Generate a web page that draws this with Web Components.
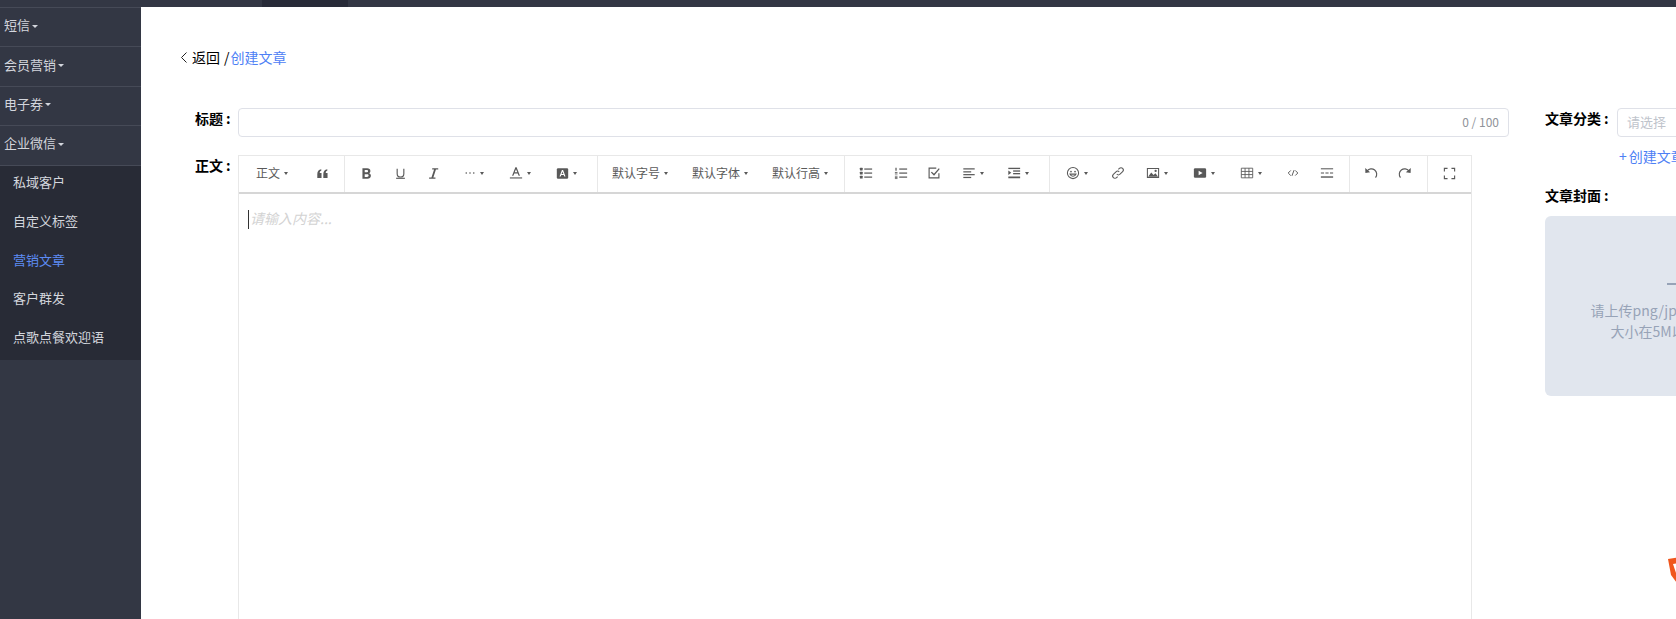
<!DOCTYPE html>
<html lang="zh">
<head>
<meta charset="utf-8">
<title>创建文章</title>
<style>
  html, body { margin: 0; height: 100%; overflow: hidden; background: #fff; }
  body { font-family: "Noto Sans CJK SC", "Noto Sans", sans-serif; }
</style>
</head>
<body>
<app-shell>
  <side-nav slot="nav"></side-nav>
  <article-form></article-form>
</app-shell>

<script>
const FONT = '"Noto Sans CJK SC", "Noto Sans", sans-serif';

// toolbar icons, all drawn on a 16x16 box
const ICONS = {
  quote: '<path fill="currentColor" d="M1.6 13.5V8.6c0-3.2 1.7-5.2 4.9-5.8v1.9C5.2 5.1 4.6 6 4.6 7.3h2.2v6.2zM9 13.5V8.6c0-3.2 1.7-5.2 4.9-5.8v1.9c-1.3.4-1.9 1.3-1.9 2.6h2.2v6.2z"/>',
  bold: '<path fill="currentColor" fill-rule="evenodd" d="M3 1.5h5.8c2.5 0 4 1.3 4 3.3 0 1.3-.7 2.3-1.8 2.8 1.500.4 2.400 1.500 2.400 3.100 0 2.300-1.700 3.800-4.400 3.800H3zm2.800 2.300v2.800h2.500c1 0 1.600-.5 1.600-1.400s-.6-1.400-1.600-1.400zm0 5v3.400h2.900c1.200 0 1.900-.6 1.900-1.700s-.7-1.700-1.900-1.700z"/>',
  underline: '<path fill="none" stroke="currentColor" stroke-width="1.4" d="M3.900 2v6.200a4.100 4.100 0 0 0 8.200 0V2"/><path fill="currentColor" d="M2.600 13.200h10.800v1.400H2.600z"/>',
  italic: '<path fill="currentColor" d="M6.400 1.500h7.400v1.600H11L7.800 12.900h2.600v1.600H2.600v-1.600h2.900L8.700 3.100H6.400z"/>',
  more: '<g fill="currentColor"><circle cx="3" cy="8" r="1.100"/><circle cx="8" cy="8" r="1.100"/><circle cx="13" cy="8" r="1.100"/></g>',
  color: '<path fill="currentColor" d="M7.300 1.500h1.400l3.800 9.500H11l-1-2.500H6l-1 2.500H3.500zm2.200 5.700L8 3.600 6.500 7.200z"/><path fill="currentColor" d="M1 13h14v1.300H1z"/>',
  bgcolor: '<rect x="1" y="1.500" width="14" height="13" rx="1.500" fill="currentColor"/><path fill="#fff" d="M7.300 3.800h1.400l3 7.900h-1.500l-.7-2H6.500l-.7 2H4.300zm1.800 4.700L8 5.700 6.900 8.500z"/>',
  ul: '<g fill="currentColor"><rect x="1" y="2" width="3.200" height="3" rx=".6"/><rect x="1" y="6.600" width="3.200" height="3" rx=".6"/><rect x="1" y="11.200" width="3.200" height="3" rx=".6"/><rect x="6" y="2.800" width="9" height="1.400"/><rect x="6" y="7.400" width="9" height="1.400"/><rect x="6" y="12" width="9" height="1.400"/></g>',
  ol: '<g fill="currentColor"><rect x="1.600" y="2" width="1.400" height="3.400"/><rect x="1" y="6.800" width="3" height="1"/><rect x="1" y="8.600" width="3" height="1"/><rect x="1" y="11.200" width="3" height=".9"/><rect x="1" y="12.600" width="3" height=".9"/><rect x="1" y="14" width="3" height=".9"/><rect x="6" y="2.800" width="9" height="1.400"/><rect x="6" y="7.400" width="9" height="1.400"/><rect x="6" y="12" width="9" height="1.400"/></g>',
  todo: '<path fill="none" stroke="currentColor" stroke-width="1.300" d="M13.600 8.400v5.200H2.400V2.400h8.200"/><path fill="none" stroke="currentColor" stroke-width="1.500" d="M5 7l3 3 6-7"/>',
  align: '<g fill="currentColor"><rect x="1.500" y="2.600" width="13" height="1.400"/><rect x="1.500" y="6" width="9" height="1.400"/><rect x="1.500" y="9.200" width="13" height="1.400"/><rect x="1.500" y="12.400" width="9" height="1.400"/></g>',
  indent: '<g fill="currentColor"><rect x="1.500" y="2" width="13.500" height="1.500"/><rect x="7" y="5" width="8" height="1.500"/><rect x="7" y="8" width="8" height="1.500"/><rect x="1.500" y="12" width="13.500" height="2"/><path d="M1.500 5l3.400 2.700-3.400 2.700z"/></g>',
  emoji: '<circle cx="8" cy="8" r="6.400" fill="none" stroke="currentColor" stroke-width="1.200"/><circle cx="5.700" cy="6.400" r="1" fill="currentColor"/><circle cx="10.300" cy="6.400" r="1" fill="currentColor"/><path fill="none" stroke="currentColor" stroke-width="1.300" d="M4.600 9.300a3.600 3.600 0 0 0 6.800 0z"/>',
  link: '<path fill="none" stroke="currentColor" stroke-width="1.200" d="M6.600 9.400a2.600 2.600 0 0 0 3.700 0l3-3a2.600 2.600 0 0 0-3.700-3.700L8.400 3.900M9.400 6.600a2.600 2.600 0 0 0-3.700 0l-3 3a2.600 2.600 0 0 0 3.700 3.700l1.200-1.200"/>',
  image: '<path fill="none" stroke="currentColor" stroke-width="1.200" d="M1.600 2.800h12.800v10.400H1.600z"/><path fill="currentColor" d="M2.400 12.400l3.600-5 2.600 3 2.200-2.200 3 4.200z"/><circle cx="11" cy="5.600" r="1.300" fill="currentColor"/>',
  video: '<rect x="1" y="2.600" width="14" height="10.800" rx="1.400" fill="currentColor"/><path fill="#fff" d="M6.400 5.400L11 8l-4.600 2.600z"/>',
  table: '<path fill="none" stroke="currentColor" stroke-width="1" d="M1.500 2.500h13v11h-13zM1.500 6.200h13M1.500 9.800h13M5.800 2.500v11M10.200 2.500v11"/>',
  code: '<path fill="none" stroke="currentColor" stroke-width="1.300" d="M5 4.600L1.600 8 5 11.400M11 4.600L14.400 8 11 11.400M9.400 4.200L6.600 11.800"/>',
  hr: '<g fill="currentColor"><rect x="1" y="2.600" width="14" height="1.200"/><rect x="1" y="7.400" width="3.600" height="1.200"/><rect x="6.200" y="7.400" width="3.600" height="1.200"/><rect x="11.400" y="7.400" width="3.600" height="1.200"/><rect x="1" y="11.800" width="14" height="1.600"/></g>',
  undo: '<path fill="none" stroke="currentColor" stroke-width="1.300" d="M3.600 5.600a6 6 0 0 1 9.600 7.600"/><path fill="currentColor" d="M1.400 2.400l.2 5.600 5.400-.9z"/>',
  redo: '<path fill="none" stroke="currentColor" stroke-width="1.300" d="M12.400 5.600a6 6 0 0 0-9.600 7.600"/><path fill="currentColor" d="M14.600 2.400L14.400 8 9 7.100z"/>',
  full: '<path fill="none" stroke="currentColor" stroke-width="1.400" d="M1.700 5.600V1.700h3.900M10.400 1.700h3.900v3.900M14.300 10.400v3.900h-3.900M5.600 14.300H1.700v-3.900"/>'
};

class AppShell extends HTMLElement {
  connectedCallback() {
    this.attachShadow({ mode: 'open' });
    this.shadowRoot.innerHTML = `
      <style>
        :host { display: flex; flex-direction: column; height: 619px; overflow: hidden; background: #333744; }
        .topbar { flex: none; height: 7px; background: #333744; padding-left: 262px; }
        .topbar div { width: 86px; height: 7px; background: #282b38; }
        .body { flex: 1; display: flex; min-height: 0; }
        .content { flex: 1; min-width: 0; background: #fff; overflow: hidden; }
      </style>
      <div class="topbar"><div></div></div>
      <div class="body">
        <slot name="nav"></slot>
        <div class="content"><slot></slot></div>
      </div>
    `;
  }
}

class SideNav extends HTMLElement {
  connectedCallback() {
    this.attachShadow({ mode: 'open' });
    const groups = ['短信', '会员营销', '电子券', '企业微信'];
    const subs = ['私域客户', '自定义标签', '营销文章', '客户群发', '点歌点餐欢迎语'];
    this.shadowRoot.innerHTML = `
      <style>
        :host { display: block; flex: none; width: 141px; background: #333744; font: 13px/20px ${FONT}; color: #d3d6dd; }
        .group { box-sizing: border-box; height: 39.4px; border-top: 1px solid #464a57; padding: 0 0 4px 4px; display: flex; align-items: center; }
        .caret { width: 0; height: 0; margin: 2px 0 0 2px; border: 3px solid transparent; border-top-color: #d3d6dd; border-bottom: 0; }
        .subs { border-top: 1px solid #464a57; background: #282b36; padding-bottom: 1px; }
        .sub { box-sizing: border-box; height: 38.75px; padding: 6.5px 0 0 13px; }
        .sub.on { color: #5d8bf4; }
      </style>
      ${groups.map(g => `<div class="group">${g}<span class="caret"></span></div>`).join('')}
      <div class="subs">
        ${subs.map((s, i) => `<div class="sub${i === 2 ? ' on' : ''}">${s}</div>`).join('')}
      </div>
    `;
  }
}

class TbItem extends HTMLElement {
  connectedCallback() {
    this.attachShadow({ mode: 'open' });
    const w = this.getAttribute('w');
    const icon = this.getAttribute('icon');
    const caret = this.hasAttribute('caret');
    const size = this.getAttribute('size') || 14;
    this.shadowRoot.innerHTML = `
      <style>
        :host { display: flex; flex: none; box-sizing: border-box; align-items: center; justify-content: center; gap: 4px; height: 36px; padding-bottom: 2px; color: #595959; font: 12px/16px ${FONT}; ${w ? `width:${w}px;` : ''} }
        svg { display: block; }
        .caret { width: 0; height: 0; border: 2.5px solid transparent; border-top: 3.5px solid #595959; border-bottom: 0; }
      </style>
      ${icon ? `<svg width="${size}" height="${size}" viewBox="0 0 16 16">${ICONS[icon]}</svg>` : '<slot></slot>'}
      ${caret ? '<span class="caret"></span>' : ''}
    `;
  }
}

class TbGroup extends HTMLElement {
  connectedCallback() {
    this.attachShadow({ mode: 'open' });
    this.shadowRoot.innerHTML = `
      <style>
        :host { box-sizing: border-box; display: flex; flex: none; height: 36px; border-right: 1px solid #e8e8e8; }
        :host([last]) { border-right: 0; }
      </style>
      <slot></slot>
    `;
  }
}

class RichEditor extends HTMLElement {
  connectedCallback() {
    this.attachShadow({ mode: 'open' });
    this.shadowRoot.innerHTML = `
      <style>
        :host { display: block; box-sizing: border-box; width: 1234px; border: 1px solid #e8e8e8; border-bottom: 0; }
        .bar { display: flex; height: 36px; border-bottom: 2px solid #d6d6d6; }
        .text { height: 520px; padding: 14px 0 0 9px; box-sizing: border-box; }
        .line { display: flex; align-items: center; height: 20px; font: italic 14px/20px ${FONT}; color: #d3d3d3; }
        .cursor { width: 1px; height: 19px; margin: 2px 1px 0 0; background: #333; }
      </style>
      <div class="bar"><slot></slot></div>
      <div class="text"><div class="line"><span class="cursor"></span>请输入内容...</div></div>
    `;
  }
}

class FormField extends HTMLElement {
  connectedCallback() {
    this.attachShadow({ mode: 'open' });
    this.shadowRoot.innerHTML = `
      <style>
        :host { display: flex; align-items: flex-start; }
        .label { flex: none; margin-top: -1px; font: bold 14px/22px ${FONT}; color: #000; white-space: nowrap; width: var(--label-width, 43px); }
        .label i { font-style: normal; margin-left: 3px; }
        .box { flex: 1; min-width: 0; }
      </style>
      <div class="label">${this.getAttribute('label')}<i>:</i></div>
      <div class="box"><slot></slot></div>
    `;
  }
}

class TextBox extends HTMLElement {
  connectedCallback() {
    this.attachShadow({ mode: 'open' });
    const placeholder = this.getAttribute('placeholder') || '';
    const count = this.getAttribute('count') || '';
    this.shadowRoot.innerHTML = `
      <style>
        :host { display: flex; box-sizing: border-box; height: 29px; align-items: center; justify-content: space-between; padding: 0 9px 2px 9px; border: 1px solid #dfe1e8; border-radius: 4px; background: #fff; font: 13px/18px ${FONT}; color: #c0c4cc; }
        .count { font-size: 12px; color: #909399; }
      </style>
      <span>${placeholder}</span><span class="count">${count}</span>
    `;
  }
}

class CoverUpload extends HTMLElement {
  connectedCallback() {
    this.attachShadow({ mode: 'open' });
    this.shadowRoot.innerHTML = `
      <style>
        :host { display: flex; flex-direction: column; align-items: center; box-sizing: border-box; width: 276px; height: 180px; padding-top: 60px; border-radius: 6px; background: #e1e6ee; color: #97a3b7; font: 14px/21px ${FONT}; }
        .plus { position: relative; width: 32px; height: 16px; margin-bottom: 8px; }
        .plus::before { content: ''; position: absolute; left: 0; right: 0; top: 7px; height: 2px; background: #97a3b7; }
        .plus::after { content: ''; position: absolute; left: 15px; width: 2px; top: -8px; bottom: -8px; background: #97a3b7; }
        div { white-space: nowrap; }
      </style>
      <span class="plus"></span>
      <div>请上传png/jpg/jpeg格式图片</div>
      <div>大小在5M以内的图片。</div>
    `;
  }
}

class ArticleForm extends HTMLElement {
  connectedCallback() {
    this.attachShadow({ mode: 'open' });
    this.shadowRoot.innerHTML = `
      <style>
        :host { display: block; position: relative; height: 612px; padding: 39px 0 0 40px; box-sizing: border-box; font: 14px/22px ${FONT}; color: #000; }
        .crumb { display: flex; align-items: center; height: 22px; }
        .crumb svg { margin-right: 5px; }
        .crumb b { font-weight: 400; margin: 0 1px 0 4px; }
        .crumb a { color: #4d80f5; }
        .form { display: flex; margin: 40px 0 0 14px; width: 1700px; }
        .main { flex: none; width: 1314px; }
        .gap { height: 18px; }
        .side { flex: none; margin-left: 36px; width: 400px; }
        .side form-field { --label-width: 72px; }
        .add { margin: 8px 0 0 74px; color: #4d80f5; }
        .add span { margin-right: 2px; }
        .cover { margin-top: 17px; }
        .cover-box { margin-top: 10px; }
        .cover-label { font: bold 14px/22px ${FONT}; }
        .cover-label i { font-style: normal; margin-left: 3px; }
        .badge { position: absolute; left: 1527px; top: 550px; }
      </style>
      <div class="crumb">
        <svg width="6" height="11" viewBox="0 0 6 11"><path d="M5.500.5l-5 5 5 5" fill="none" stroke="#222" stroke-width="1"/></svg>
        <span>返回</span><b>/</b><a>创建文章</a>
      </div>
      <div class="form">
        <div class="main">
          <form-field label="标题"><text-box count="0 / 100"></text-box></form-field>
          <div class="gap"></div>
          <form-field label="正文">
            <rich-editor>
              <tb-group style="width:106px;padding-left:8px;gap:4px;box-sizing:border-box">
                <tb-item w="50" caret>正文</tb-item><tb-item w="42" icon="quote" size="13"></tb-item>
              </tb-group>
              <tb-group style="width:253px;padding-left:4px">
                <tb-item w="34" icon="bold" size="13"></tb-item><tb-item w="34" icon="underline" size="13"></tb-item><tb-item w="32" icon="italic" size="13"></tb-item><tb-item w="50" icon="more" size="12" caret></tb-item><tb-item w="42" icon="color" caret></tb-item><tb-item w="50" icon="bgcolor" size="13" caret></tb-item>
              </tb-group>
              <tb-group style="width:247px;padding-left:14px;gap:24px">
                <tb-item caret>默认字号</tb-item><tb-item caret>默认字体</tb-item><tb-item caret>默认行高</tb-item>
              </tb-group>
              <tb-group style="width:205px;padding-left:4px">
                <tb-item w="34" icon="ul"></tb-item><tb-item w="36" icon="ol"></tb-item><tb-item w="30" icon="todo"></tb-item><tb-item w="48" icon="align" caret></tb-item><tb-item w="42" icon="indent" caret></tb-item>
              </tb-group>
              <tb-group style="width:300px;padding-left:4px">
                <tb-item w="46" icon="emoji" caret></tb-item><tb-item w="36" icon="link"></tb-item><tb-item w="42" icon="image" caret></tb-item><tb-item w="52" icon="video" caret></tb-item><tb-item w="42" icon="table" caret></tb-item><tb-item w="42" icon="code" size="12"></tb-item><tb-item w="26" icon="hr"></tb-item>
              </tb-group>
              <tb-group style="width:78px;padding-left:4px">
                <tb-item w="34" icon="undo"></tb-item><tb-item w="34" icon="redo"></tb-item>
              </tb-group>
              <tb-group last>
                <tb-item w="43" icon="full" size="13"></tb-item>
              </tb-group>
            </rich-editor>
          </form-field>
        </div>
        <div class="side">
          <form-field label="文章分类"><text-box placeholder="请选择"></text-box></form-field>
          <div class="add"><span>+</span>创建文章分类</div>
          <div class="cover cover-label">文章封面<i>:</i></div>
          <cover-upload class="cover-box"></cover-upload>
        </div>
      </div>
      <svg class="badge" width="30" height="26" viewBox="0 0 30 26"><path d="M0 2l18-3 5 22-14 5-6-8z" fill="#f0561d"/><path d="M5 7l12-2 3 14-10 3-2-6z" fill="#fff"/></svg>
    `;
  }
}

customElements.define('app-shell', AppShell);
customElements.define('side-nav', SideNav);
customElements.define('tb-item', TbItem);
customElements.define('tb-group', TbGroup);
customElements.define('rich-editor', RichEditor);
customElements.define('form-field', FormField);
customElements.define('text-box', TextBox);
customElements.define('cover-upload', CoverUpload);
customElements.define('article-form', ArticleForm);
</script>
</body>
</html>
